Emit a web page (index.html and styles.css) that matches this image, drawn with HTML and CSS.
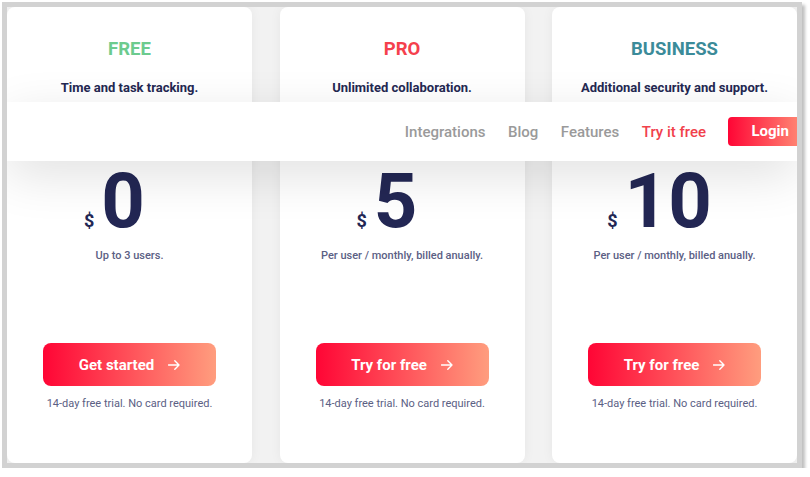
FILE: index.html
```html
<!DOCTYPE html>
<html lang="en">
<head>
    <meta charset="UTF-8">
    <meta name="viewport" content="width=device-width, initial-scale=1.0">
    <title>Pricing</title>
    <link rel="stylesheet" href="styles.css">
</head>
<body>

    <div class="frame">

        <!-- Pricing cards -->
        <div class="pricing">
            <div class="plan">
                <h2 class="plan-name free">FREE</h2>
                <p class="plan-desc">Time and task tracking.</p>
                <div class="price">
                    <span class="currency">$</span>
                    <span class="amount">0</span>
                </div>
                <p class="price-note">Up to 3 users.</p>
                <a class="plan-btn" href="#">Get started
                    <svg class="arrow" width="12" height="10" viewBox="0 0 12 10"><path d="M0.5 5H11M6.8 0.8L11 5L6.8 9.2" fill="none" stroke="#fff" stroke-width="1.4" stroke-linecap="round" stroke-linejoin="round"/></svg>
                </a>
                <p class="trial">14-day free trial. No card required.</p>
            </div>

            <div class="plan">
                <h2 class="plan-name pro">PRO</h2>
                <p class="plan-desc">Unlimited collaboration.</p>
                <div class="price">
                    <span class="currency">$</span>
                    <span class="amount">5</span>
                </div>
                <p class="price-note">Per user / monthly, billed anually.</p>
                <a class="plan-btn" href="#">Try for free
                    <svg class="arrow" width="12" height="10" viewBox="0 0 12 10"><path d="M0.5 5H11M6.8 0.8L11 5L6.8 9.2" fill="none" stroke="#fff" stroke-width="1.4" stroke-linecap="round" stroke-linejoin="round"/></svg>
                </a>
                <p class="trial">14-day free trial. No card required.</p>
            </div>

            <div class="plan">
                <h2 class="plan-name business">BUSINESS</h2>
                <p class="plan-desc">Additional security and support.</p>
                <div class="price">
                    <span class="currency">$</span>
                    <span class="amount">10</span>
                </div>
                <p class="price-note">Per user / monthly, billed anually.</p>
                <a class="plan-btn" href="#">Try for free
                    <svg class="arrow" width="12" height="10" viewBox="0 0 12 10"><path d="M0.5 5H11M6.8 0.8L11 5L6.8 9.2" fill="none" stroke="#fff" stroke-width="1.4" stroke-linecap="round" stroke-linejoin="round"/></svg>
                </a>
                <p class="trial">14-day free trial. No card required.</p>
            </div>
        </div>

        <!-- Sticky header lying over the cards -->
        <header class="topbar">
            <nav class="nav">
                <a href="#">Integrations</a>
                <a href="#">Blog</a>
                <a href="#">Features</a>
                <a href="#" class="nav-try">Try it free</a>
                <a href="#" class="login-btn">Login</a>
            </nav>
        </header>

    </div>

</body>
</html>
```

FILE: styles.css
```css
body {
    margin: 0;
    background-color: #fff;
    font-family: Roboto, "Liberation Sans", Arial, sans-serif;
}
.frame {
    position: relative;
    width: 790px;
    height: 456px;
    margin: 2px 0 0 2px;
    border: 5px solid #d2d2d2;
    box-shadow: 3px 3px 3px rgba(0, 0, 0, 0.25);
    overflow: hidden;
}
.pricing {
    display: grid;
    grid-template-columns: repeat(3, 245px);
    column-gap: 27.5px;
    height: 100%;
    background-color: #f2f2f2;
}
.plan {
    background-color: white;
    border-radius: 8px;
    box-shadow: 0 0 12px rgba(0, 0, 0, 0.05);
    padding-top: 30px;
    text-align: center;
}
.plan-name {
    margin: 0;
    font-size: 18.5px;
    line-height: 24px;
    font-weight: 700;
}
.free {
    color: #6ccb8e;
}
.pro {
    color: #f5404d;
}
.business {
    color: #3b8b99;
}
.plan-desc {
    margin: 18px 0 0;
    font-size: 13px;
    line-height: 18px;
    font-weight: 700;
    color: #242852;
}
.price {
    display: flex;
    justify-content: center;
    align-items: baseline;
    margin-top: 66px;
    padding-right: 30px;
    color: #232754;
}
.currency {
    font-size: 18px;
    font-weight: 700;
    margin-right: 7px;
}
.amount {
    font-size: 76px;
    line-height: 76px;
    font-weight: 700;
}
.price-note {
    margin: 9px 0 0;
    font-size: 11px;
    line-height: 16px;
    font-weight: 500;
    color: #5b6084;
}
.plan-btn {
    display: flex;
    justify-content: center;
    align-items: center;
    width: 173px;
    height: 43px;
    margin: 79px auto 0;
    border-radius: 8px;
    background: linear-gradient(to right, #ff0535, #ff9d7e);
    color: white;
    font-size: 15px;
    font-weight: 700;
    text-decoration: none;
}
.arrow {
    margin-left: 14px;
}
.trial {
    margin: 10px 0 0;
    font-size: 11px;
    line-height: 16px;
    color: #5b6084;
}
/* Header bar */
.topbar {
    position: absolute;
    top: 95px;
    left: 0;
    right: 0;
    height: 59px;
    background-color: white;
    box-shadow: 0 14px 50px rgba(0, 0, 0, 0.12);
    display: flex;
    justify-content: flex-end;
    align-items: center;
}
.nav {
    display: flex;
    align-items: center;
    gap: 22.5px;
    margin-right: -15px;
}
.nav a {
    font-size: 15px;
    font-weight: 500;
    color: #9a9a9a;
    text-decoration: none;
}
.nav .nav-try {
    color: #f1414c;
}
.nav .login-btn {
    height: 29px;
    line-height: 29px;
    padding: 0 23px;
    border-radius: 4px;
    background: linear-gradient(to right, #ff0535, #ff9d7e);
    color: white;
    font-weight: 700;
}
```
